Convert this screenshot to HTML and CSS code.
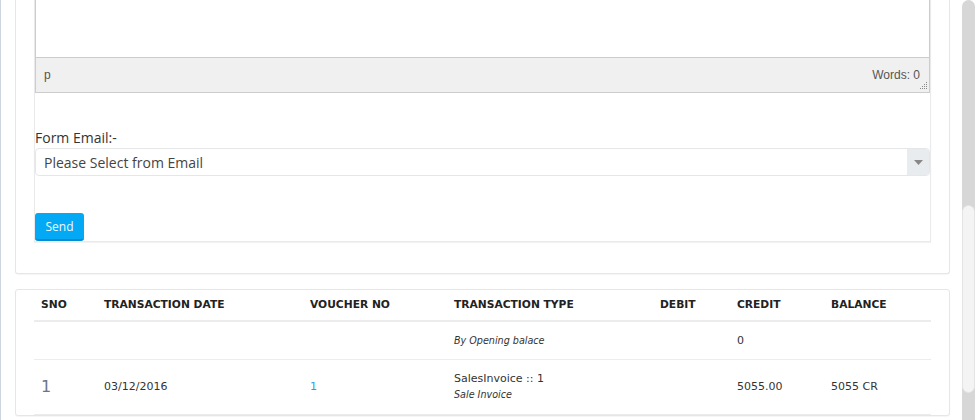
FILE: index.html
```html
<!DOCTYPE html>
<html>
<head>
<meta charset="utf-8">
<link rel="stylesheet" href="styles.css">
</head>
<body>
<div class="page">
  <div class="edge"></div>
  <main class="content">
    <section class="card card-form">
      <div class="form-box">
        <div class="editor">
          <div class="editor-area"></div>
          <div class="statusbar">
            <span class="path">p</span>
            <span class="words">Words: 0</span>
            <svg class="grip" width="7" height="7" viewBox="0 0 7 7">
              <g fill="#888">
                <rect x="6" y="0" width="1" height="1"/>
                <rect x="4" y="2" width="1" height="1"/><rect x="6" y="2" width="1" height="1"/>
                <rect x="2" y="4" width="1" height="1"/><rect x="4" y="4" width="1" height="1"/><rect x="6" y="4" width="1" height="1"/>
                <rect x="0" y="6" width="1" height="1"/><rect x="2" y="6" width="1" height="1"/><rect x="4" y="6" width="1" height="1"/><rect x="6" y="6" width="1" height="1"/>
              </g>
            </svg>
          </div>
        </div>
        <label class="field-label">Form Email:-</label>
        <div class="select">
          <span class="select-text">Please Select from Email</span>
          <span class="select-arrow"><svg width="9" height="5" viewBox="0 0 9 5"><path d="M0 0H9L4.5 5Z" fill="#888"/></svg></span>
        </div>
        <button class="btn-send">Send</button>
      </div>
    </section>

    <section class="card card-table">
      <table class="ledger">
        <colgroup>
          <col class="c-sno"><col class="c-date"><col class="c-voucher"><col class="c-type"><col class="c-debit"><col class="c-credit"><col class="c-balance">
        </colgroup>
        <thead>
          <tr>
            <th>SNO</th>
            <th>TRANSACTION DATE</th>
            <th>VOUCHER NO</th>
            <th>TRANSACTION TYPE</th>
            <th>DEBIT</th>
            <th>CREDIT</th>
            <th>BALANCE</th>
          </tr>
        </thead>
        <tbody>
          <tr class="row-open">
            <td></td>
            <td></td>
            <td></td>
            <td><em class="note">By Opening balace</em></td>
            <td></td>
            <td>0</td>
            <td></td>
          </tr>
          <tr class="row-main">
            <td class="sno">1</td>
            <td>03/12/2016</td>
            <td><a class="link" href="#">1</a></td>
            <td><div class="type">SalesInvoice :: 1</div><em class="note">Sale Invoice</em></td>
            <td></td>
            <td>5055.00</td>
            <td>5055 CR</td>
          </tr>
        </tbody>
      </table>
    </section>
  </main>
  <div class="scrollbar">
    <div class="scroll-track">
      <div class="scroll-gap"></div>
      <div class="scroll-thumb"></div>
    </div>
  </div>
</div>
</body>
</html>
```

FILE: styles.css
```css
html, body {
  margin: 0;
  padding: 0;
  background: #fff;
  overflow: hidden;
  height: 420px;
}

.page {
  display: flex;
  height: 420px;
  overflow: hidden;
  font-family: "DejaVu Sans", sans-serif;
  color: #333;
}

.edge {
  width: 1px;
  flex: none;
  background: #cdd5de;
}

.content {
  flex: 1;
  padding: 0 12px 0 14px;
  min-width: 0;
}

.card {
  background: #fff;
  border: 1px solid #e6e6e6;
  border-radius: 3px;
  box-shadow: 0 1px 1px rgba(0,0,0,0.04);
}

.card-form {
  border-top: none;
  border-radius: 0 0 3px 3px;
  padding: 0 18px 31px 18px;
}

.form-box {
  border: 1px solid #eaeaea;
  border-top: none;
  box-shadow: 0 1px 1px rgba(0,0,0,0.05);
  display: flex;
  flex-direction: column;
  align-items: stretch;
}

.editor {
  border: 1px solid #cccccc;
  border-top: none;
}

.editor-area {
  height: 57px;
  background: #fff;
}

.statusbar {
  height: 34px;
  background: #f0f0f0;
  border-top: 1px solid #cccccc;
  display: flex;
  align-items: center;
  justify-content: space-between;
  padding: 0 9px 0 8px;
  font-family: "Liberation Sans", Arial, sans-serif;
  font-size: 12px;
  color: #555;
  position: relative;
}

.grip {
  position: absolute;
  right: 2px;
  bottom: 3px;
}

.field-label {
  margin-top: 35px;
  font-family: "Open Sans", sans-serif;
  font-size: 14px;
  line-height: 19px;
  color: #333;
}

.select {
  margin-top: 1px;
  height: 28px;
  box-sizing: border-box;
  border: 1px solid #e4e6e8;
  border-radius: 4px;
  display: flex;
  align-items: stretch;
  overflow: hidden;
  background: #fff;
}

.select-text {
  flex: 1;
  display: flex;
  align-items: center;
  padding-left: 8px;
  font-family: "Open Sans", sans-serif;
  font-size: 14px;
  color: #444;
}

.select-arrow {
  width: 22px;
  background: #e9ecef;
  display: flex;
  align-items: center;
  justify-content: center;
}

.btn-send {
  align-self: flex-start;
  margin-top: 37px;
  width: 49px;
  height: 28px;
  border: none;
  border-bottom: 2px solid #0a8bd0;
  border-radius: 3px;
  background: #03a9f4;
  color: #f0faff;
  font-family: "Open Sans", sans-serif;
  font-size: 12px;
  padding: 0;
  cursor: pointer;
}

.card-table {
  margin-top: 15px;
  padding: 0 18px;
}

.ledger {
  width: 100%;
  border-collapse: collapse;
  table-layout: fixed;
}

.c-sno { width: 63px; }
.c-date { width: 206px; }
.c-voucher { width: 144px; }
.c-type { width: 206px; }
.c-debit { width: 77px; }
.c-credit { width: 94px; }
.c-balance { width: auto; }

.ledger th {
  text-align: left;
  font-size: 10.7px;
  font-weight: bold;
  color: #222;
  line-height: 15px;
  padding: 7px 7px 8px;
  border-bottom: 2px solid #ececec;
}

.ledger td {
  font-size: 11px;
  color: #333;
  line-height: 16px;
  padding: 10px 7px;
  vertical-align: middle;
  border-bottom: 1px solid #ececec;
}

.row-open td {
  padding: 11px 7px 10px;
}

.row-main td {
  padding: 11px 7px 11px;
}

.note {
  font-size: 9.6px;
  font-style: italic;
  color: #333;
}

.type {
  font-size: 11px;
}

.sno {
  font-size: 16px !important;
  color: #6a7684 !important;
}

.link {
  color: #1ea3ea;
  text-decoration: none;
}

.scrollbar {
  width: 15px;
  flex: none;
  padding-right: 2px;
  box-sizing: border-box;
}

.scroll-track {
  height: 100%;
  background: #d7d7d7;
  border-radius: 7px 7px 0 0;
  display: flex;
  flex-direction: column;
}

.scroll-gap {
  height: 205px;
  flex: none;
}

.scroll-thumb {
  height: 188px;
  flex: none;
  background: #f4f4f4;
  border: 1px solid #e4e4e4;
  border-radius: 7px;
  box-sizing: border-box;
}
```
